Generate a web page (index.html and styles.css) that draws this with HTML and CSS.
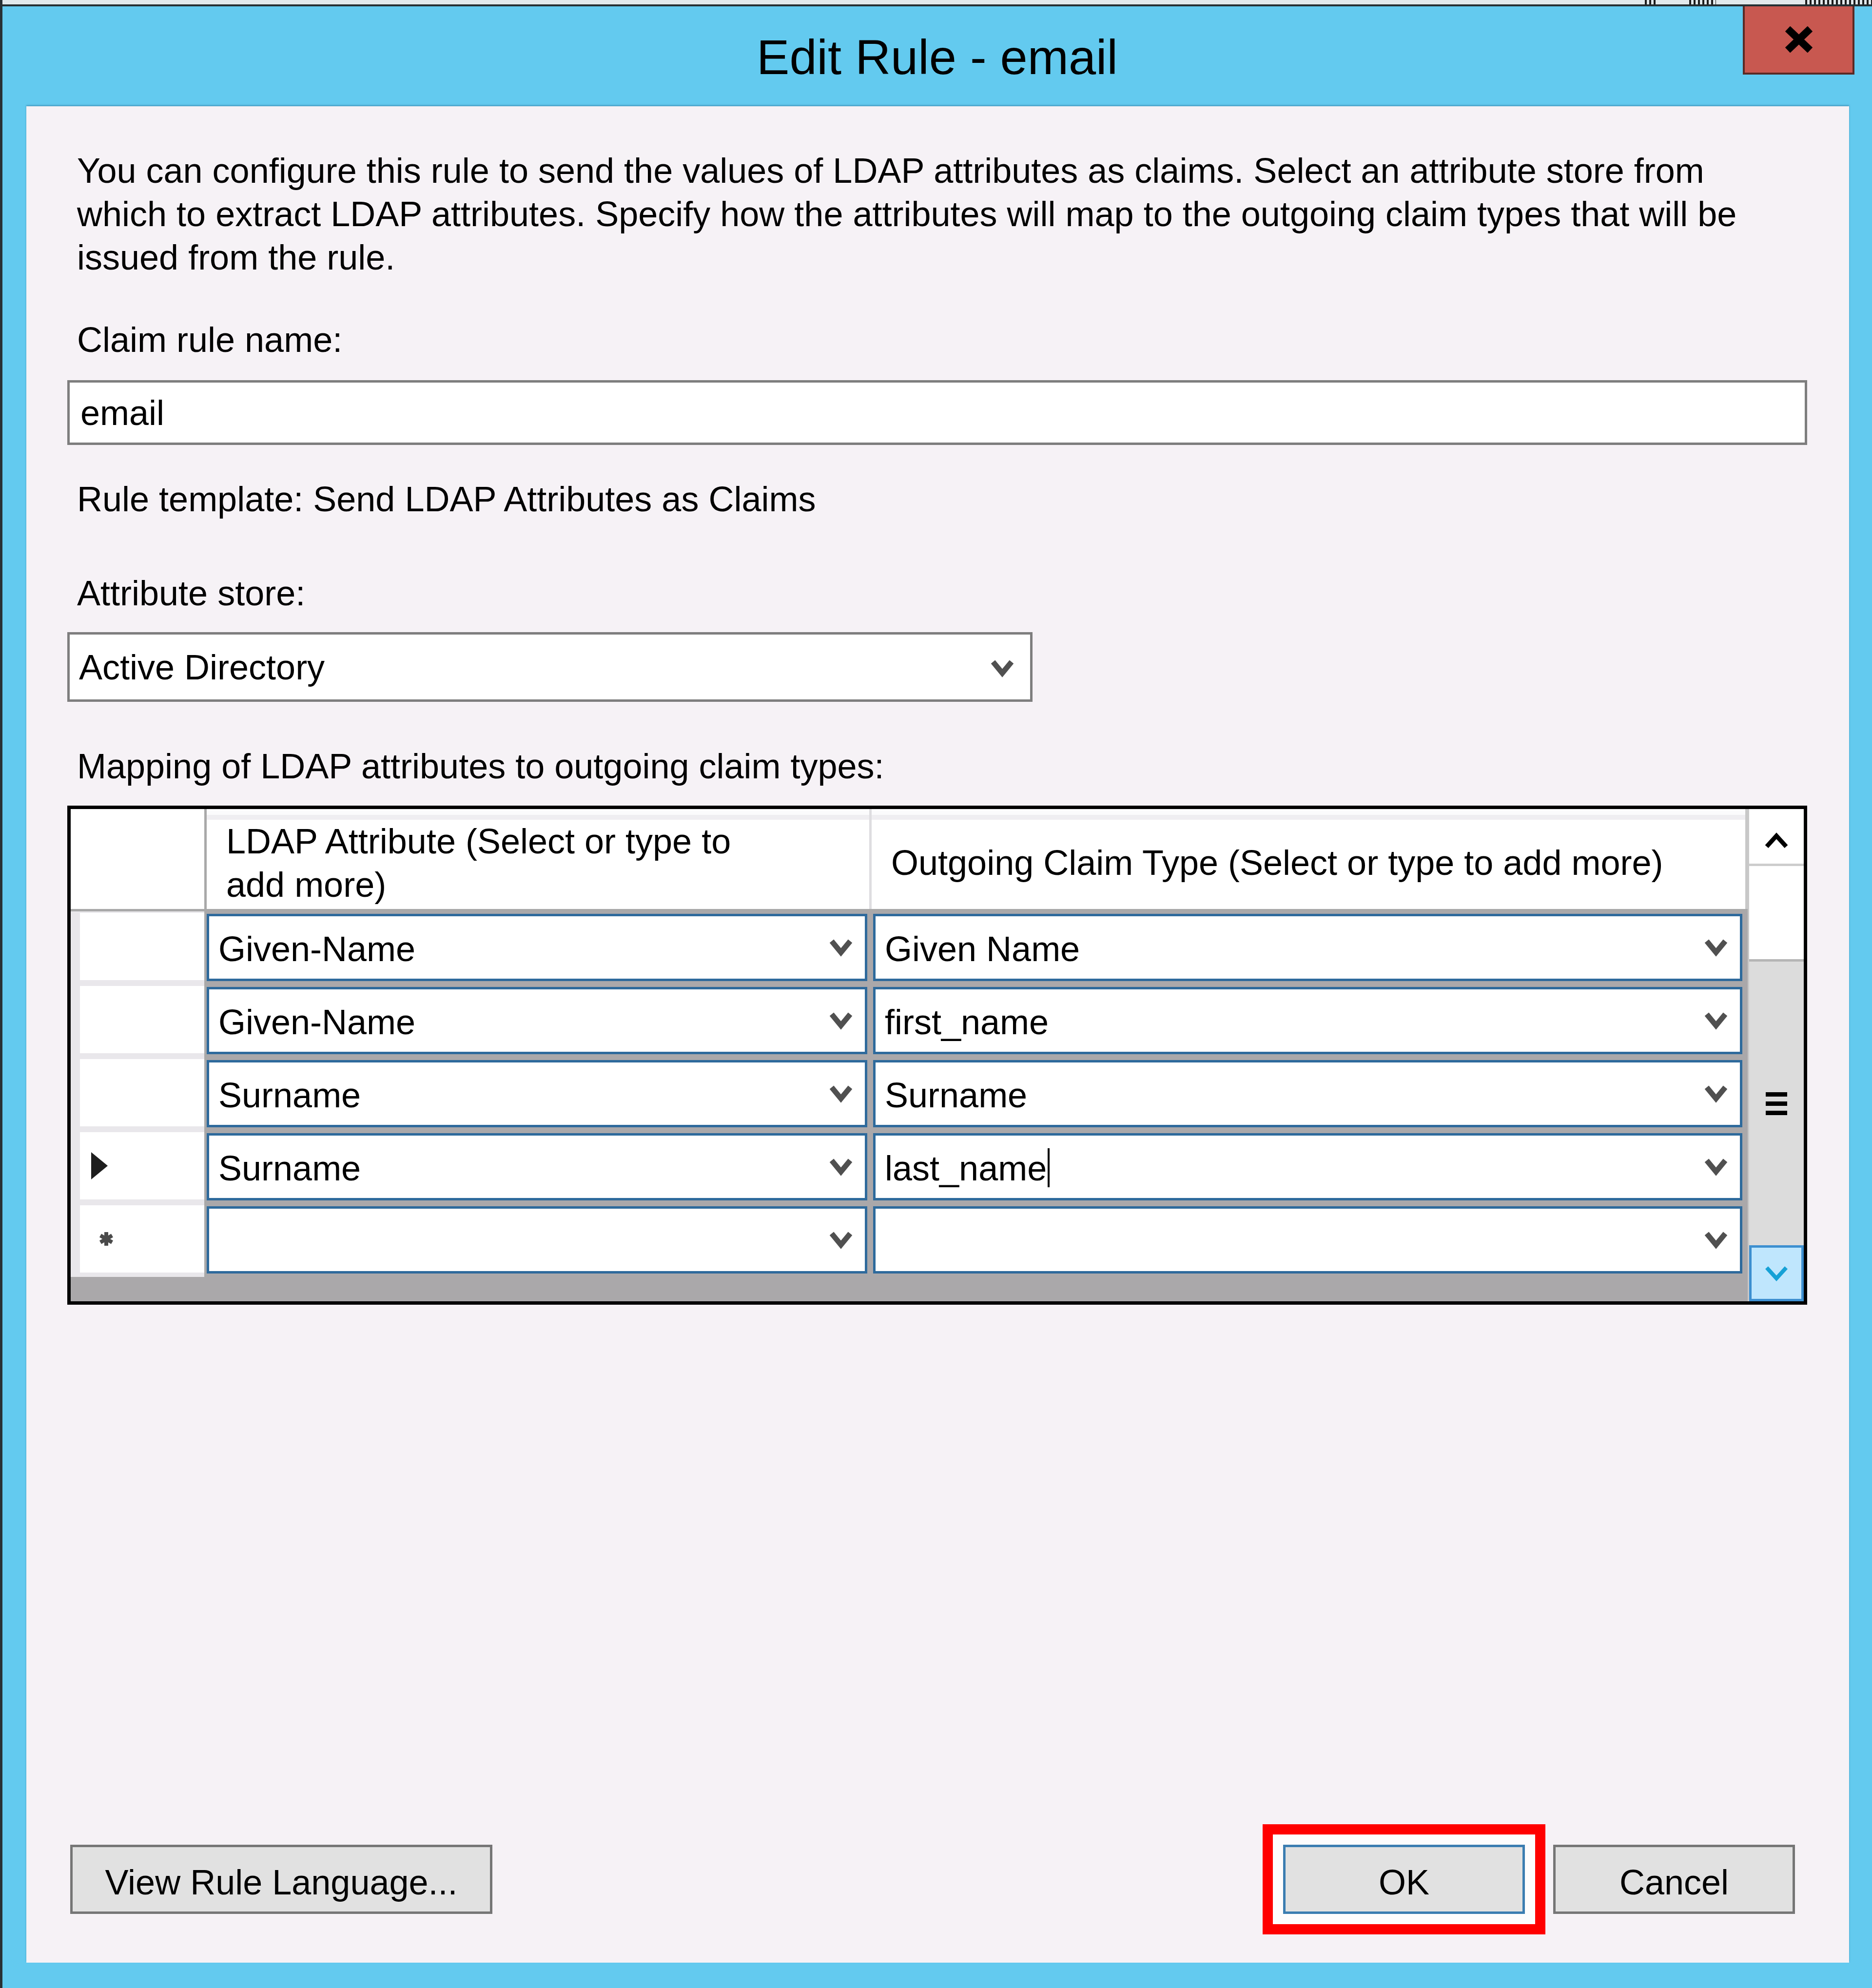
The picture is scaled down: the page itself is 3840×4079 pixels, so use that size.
FILE: index.html
```html
<!DOCTYPE html>
<html lang="en">
<head>
    <meta charset="UTF-8">
    <title>Edit Rule - email</title>
    <link rel="stylesheet" href="styles.css">
</head>
<body>
    <div class="window">
        <div class="topline">
            <span class="behind behind-a"></span>
            <span class="behind behind-b"></span>
            <span class="behind behind-c"></span>
        </div>
        <div class="titlebar">
            <div></div>
            <div class="title">Edit Rule - email</div>
            <div class="close-btn">
                <svg width="62" height="54" viewBox="0 0 62 54"><path d="M8 5 L54 49 M54 5 L8 49" stroke="#000" stroke-width="15"/></svg>
            </div>
        </div>

        <div class="panel">
            <p class="intro">You can configure this rule to send the values of LDAP attributes as claims. Select an attribute store from<br>which to extract LDAP attributes. Specify how the attributes will map to the outgoing claim types that will be<br>issued from the rule.</p>

            <div class="label label-name">Claim rule name:</div>
            <div class="textbox">email</div>

            <div class="label label-template">Rule template: Send LDAP Attributes as Claims</div>

            <div class="label label-store">Attribute store:</div>
            <div class="combo">
                <span>Active Directory</span>
                <svg class="chev" viewBox="0 0 48 40"><polyline points="5,7 24,30 43,7"/></svg>
            </div>

            <div class="label label-map">Mapping of LDAP attributes to outgoing claim types:</div>
            <div class="grid">
                <div class="grid-main">
                    <div class="grid-head">
                        <div class="corner"></div>
                        <div class="col-head">LDAP Attribute (Select or type to<br>add more)</div>
                        <div class="col-head col-head-2">Outgoing Claim Type (Select or type to add more)</div>
                    </div>

                    <div class="grid-row">
                        <div class="row-head"><div class="row-head-inner"></div></div>
                        <div class="cell"><div class="cell-box"><span>Given-Name</span><svg class="chev" viewBox="0 0 48 40"><polyline points="5,7 24,30 43,7"/></svg></div></div>
                        <div class="cell"><div class="cell-box"><span>Given Name</span><svg class="chev" viewBox="0 0 48 40"><polyline points="5,7 24,30 43,7"/></svg></div></div>
                    </div>
                    <div class="grid-row">
                        <div class="row-head"><div class="row-head-inner"></div></div>
                        <div class="cell"><div class="cell-box"><span>Given-Name</span><svg class="chev" viewBox="0 0 48 40"><polyline points="5,7 24,30 43,7"/></svg></div></div>
                        <div class="cell"><div class="cell-box"><span>first_name</span><svg class="chev" viewBox="0 0 48 40"><polyline points="5,7 24,30 43,7"/></svg></div></div>
                    </div>
                    <div class="grid-row">
                        <div class="row-head"><div class="row-head-inner"></div></div>
                        <div class="cell"><div class="cell-box"><span>Surname</span><svg class="chev" viewBox="0 0 48 40"><polyline points="5,7 24,30 43,7"/></svg></div></div>
                        <div class="cell"><div class="cell-box"><span>Surname</span><svg class="chev" viewBox="0 0 48 40"><polyline points="5,7 24,30 43,7"/></svg></div></div>
                    </div>
                    <div class="grid-row">
                        <div class="row-head"><div class="row-head-inner">
                            <svg class="current" width="34" height="56" viewBox="0 0 34 56"><polygon points="0,0 34,28 0,56"/></svg>
                        </div></div>
                        <div class="cell"><div class="cell-box"><span>Surname</span><svg class="chev" viewBox="0 0 48 40"><polyline points="5,7 24,30 43,7"/></svg></div></div>
                        <div class="cell"><div class="cell-box"><span>last_name<span class="caret"></span></span><svg class="chev" viewBox="0 0 48 40"><polyline points="5,7 24,30 43,7"/></svg></div></div>
                    </div>
                    <div class="grid-row">
                        <div class="row-head"><div class="row-head-inner">
                            <svg class="newrow" width="32" height="32" viewBox="0 0 32 32"><path d="M16 2 V30 M4 9 L28 23 M28 9 L4 23"/></svg>
                        </div></div>
                        <div class="cell"><div class="cell-box"><span></span><svg class="chev" viewBox="0 0 48 40"><polyline points="5,7 24,30 43,7"/></svg></div></div>
                        <div class="cell"><div class="cell-box"><span></span><svg class="chev" viewBox="0 0 48 40"><polyline points="5,7 24,30 43,7"/></svg></div></div>
                    </div>
                    <div class="grid-fill"></div>
                </div>

                <div class="scrollbar">
                    <div class="sb-up"><svg width="50" height="34" viewBox="0 0 50 34"><polyline points="5,29 25,7 45,29"/></svg></div>
                    <div class="sb-track"></div>
                    <div class="sb-thumb"><span class="grip"></span></div>
                    <div class="sb-down"><svg width="50" height="34" viewBox="0 0 50 34"><polyline points="5,5 25,27 45,5"/></svg></div>
                </div>
            </div>

            <div class="buttons">
                <button type="button" class="btn btn-view">View Rule Language...</button>
                <button type="button" class="btn btn-ok">OK</button>
                <button type="button" class="btn btn-cancel">Cancel</button>
            </div>
        </div>
    </div>
</body>
</html>
```

FILE: styles.css
```css
body {
    margin: 0;
    background: #63caef;
    font-family: "Liberation Sans", Arial, sans-serif;
    color: #000;
}
.window {
    height: 4079px;
    display: flex;
    flex-direction: column;
    box-sizing: border-box;
    border-left: 5px solid #283135;
    background: #63caef;
}
.topline {
    height: 13px;
    box-sizing: border-box;
    background: #e2e9ec;
    border-bottom: 4px solid #263034;
    display: flex;
    justify-content: flex-end;
}
/* bits of the window underneath showing through the strip */
.behind {
    height: 9px;
    background: repeating-linear-gradient(90deg, #1c1c1c 0 4px, transparent 4px 9px);
}
.behind-a { width: 26px; margin-right: 65px; }
.behind-b { width: 55px; margin-right: 183px; }
.behind-c { width: 137px; }
.titlebar {
    height: 205px;
    display: grid;
    grid-template-columns: 1fr auto 1fr;
}
.title {
    padding-top: 34px;
    font-size: 101px;
    line-height: 140px;
}
.close-btn {
    justify-self: end;
    margin-right: 36px;
    width: 229px;
    height: 140px;
    box-sizing: border-box;
    background: #c85850;
    border: 4px solid #5a2a25;
    border-top: 0;
    display: flex;
    align-items: center;
    justify-content: center;
}

.panel {
    flex: 1;
    margin: 0 47px 52px 49px;
    padding: 88px 86px 100px 84px;
    background: #f6f2f6;
    box-shadow: 0 -2px 3px rgba(30, 90, 130, 0.45);
    display: flex;
    flex-direction: column;
    font-size: 72px;
    line-height: 89px;
}
.intro {
    margin: 0;
    padding-left: 20px;
    white-space: nowrap;
}
.label {
    padding-left: 20px;
    white-space: nowrap;
}
.label-name { margin-top: 80px; }
.label-template { margin-top: 67px; }
.label-store { margin-top: 104px; }
.label-map { margin-top: 88px; }

.textbox {
    margin-top: 38px;
    height: 133px;
    box-sizing: border-box;
    padding: 18px 22px 0;
    background: #fff;
    border: 5px solid #7e7e7e;
}
.combo {
    margin-top: 35px;
    width: 1980px;
    height: 143px;
    box-sizing: border-box;
    padding: 23px 33px 0 19px;
    background: #fff;
    border: 5px solid #7e7e7e;
    display: flex;
    justify-content: space-between;
}
.chev {
    width: 48px;
    height: 40px;
    align-self: center;
    flex: none;
}
.chev polyline {
    fill: none;
    stroke: #505050;
    stroke-width: 11;
}
.combo .chev { margin-top: -19px; }

/* data grid */
.grid {
    margin-top: 36px;
    height: 1024px;
    box-sizing: border-box;
    border: 7px solid #000;
    display: flex;
}
.grid-main {
    flex: 1;
    min-width: 0;
    display: flex;
    flex-direction: column;
    background: #aaa8aa;
}
.grid-head,
.grid-row {
    display: grid;
    grid-template-columns: 279px 1359px minmax(0, 1fr);
}
.grid-head {
    height: 205px;
    background: #fff;
    border-bottom: 5px solid #a9a9a9;
}
.corner {
    border-right: 5px solid #a9a9a9;
    background: #fff;
}
.col-head {
    padding: 22px 0 0 40px;
    white-space: nowrap;
    overflow: hidden;
    background: linear-gradient(#fbfbfc 0 12px, #efeef1 12px 22px, #fff 22px);
}
.col-head-2 {
    display: flex;
    align-items: center;
    padding: 16px 0 0 40px;
    border-left: 5px solid #dedde0;
    border-right: 5px solid #c8c8c8;
}
.grid-row {
    height: 150px;
}
.row-head {
    border-right: 5px solid #a9a9a9;
    background: #e9e7eb;
    padding: 3px 0 9px 19px;
    display: flex;
}
.row-head-inner {
    flex: 1;
    background: #fff;
    display: flex;
    align-items: center;
}
.current {
    margin-left: 23px;
    fill: #1e1e1e;
}
.newrow {
    margin-left: 38px;
    stroke: #4a4a4a;
    stroke-width: 8;
}
.cell {
    display: flex;
    min-width: 0;
    padding: 5px 4px 7px 0;
}
.cell + .cell {
    padding: 5px 11px 7px 8px;
}
.cell-box {
    flex: 1;
    box-sizing: border-box;
    background: #fff;
    border: 5px solid #2e6a9c;
    padding: 23px 25px 0 19px;
    display: flex;
    justify-content: space-between;
    white-space: nowrap;
}
.cell-box .chev { margin-top: -23px; }
.caret {
    display: inline-block;
    width: 4px;
    height: 80px;
    margin-left: 2px;
    vertical-align: -14px;
    background: #000;
}
.grid-fill {
    flex: 1;
}

.scrollbar {
    width: 115px;
    flex: none;
    display: flex;
    flex-direction: column;
    background: #fff;
    border-left: 3px solid #c9c9c9;
    box-sizing: border-box;
}
.sb-up {
    height: 117px;
    box-sizing: border-box;
    border-bottom: 5px solid #cdcdcd;
    display: flex;
    align-items: center;
    justify-content: center;
    padding-top: 18px;
}
.sb-up polyline {
    fill: none;
    stroke: #000;
    stroke-width: 9;
}
.sb-track {
    height: 191px;
}
.sb-thumb {
    flex: 1;
    background: #dcdcdc;
    border-top: 5px solid #b5b5b5;
    display: flex;
    align-items: center;
    justify-content: center;
}
.grip {
    width: 44px;
    height: 47px;
    background: repeating-linear-gradient(#000 0 9px, transparent 9px 19px);
}
.sb-down {
    height: 115px;
    box-sizing: border-box;
    background: #bfe6fd;
    border: 5px solid #3d8fd0;
    display: flex;
    align-items: center;
    justify-content: center;
}
.sb-down polyline {
    fill: none;
    stroke: #15a1d6;
    stroke-width: 8;
}

/* dialog buttons */
.buttons {
    margin-top: auto;
    display: flex;
    align-items: center;
}
.btn {
    height: 142px;
    box-sizing: border-box;
    padding: 12px 0 0;
    border: 5px solid #767676;
    background: #e1e1e1;
    font: inherit;
    color: #000;
}
.btn-view {
    width: 866px;
    margin-left: 6px;
}
.btn-ok {
    width: 496px;
    margin-left: auto;
    border-color: #3b7db1;
    box-shadow: 0 0 0 21px #fdfcfd, 0 0 0 42px #ff0000;
}
.btn-cancel {
    width: 496px;
    margin-left: 58px;
    margin-right: 25px;
}
```
